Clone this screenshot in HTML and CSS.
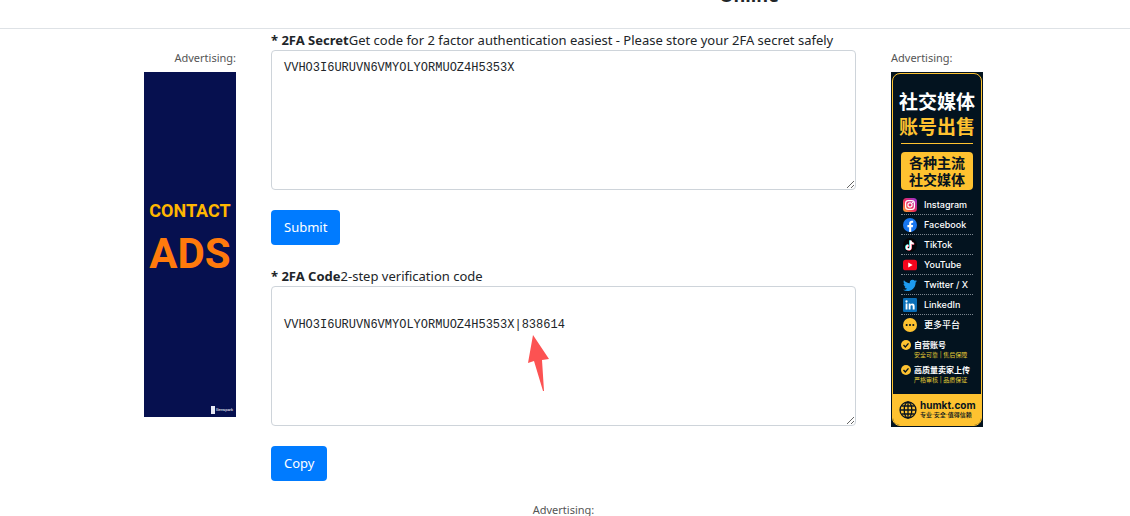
FILE: index.html
```html
<!DOCTYPE html>
<html lang="en">
  <head>
    <meta charset="utf-8" />
    <meta name="viewport" content="width=device-width, initial-scale=1" />
    <title>2FA</title>
    <link rel="stylesheet" href="styles.css" />
  </head>
  <body>
    <header class="header">
      <h1>Online</h1>
    </header>

    <div class="wrapper">
      <aside class="side side-left">
        <p class="ad-label">Advertising:</p>
        <a href="#" class="ad-contact">
          <span class="contact">CONTACT</span>
          <span class="ads">ADS</span>
          <span class="badge"><i></i>Genspark</span>
        </a>
      </aside>

      <main>
        <div class="form-group">
          <label for="listToken"><b>* 2FA Secret</b>Get code for 2 factor authentication easiest - Please store your 2FA secret safely</label>
          <textarea id="listToken" class="form-control" spellcheck="false">VVHO3I6URUVN6VMYOLYORMUOZ4H5353X</textarea>
        </div>
        <button type="button" class="btn" id="submit">Submit</button>

        <div class="form-group output">
          <label for="output"><b>* 2FA Code</b>2-step verification code</label>
          <textarea id="output" class="form-control" spellcheck="false">

VVHO3I6URUVN6VMYOLYORMUOZ4H5353X|838614</textarea>
          <svg class="arrow" viewBox="0 0 22 57" aria-hidden="true">
            <path d="M6 0 22 24 15 25 17 56h-1L7 26 1 28z" fill="#fc5252" />
          </svg>
        </div>
        <button type="button" class="btn" id="copy">Copy</button>

        <p class="ad-label ad-bottom">Advertising:</p>
      </main>

      <aside class="side">
        <p class="ad-label">Advertising:</p>
        <a href="#" class="ad-market">
          <span class="frame">
            <span class="title">社交媒体</span>
            <span class="title gold">账号出售</span>
            <span class="rule"></span>
            <span class="box">各种主流<br />社交媒体</span>
            <ul class="platforms">
              <li>
                <svg viewBox="0 0 16 16">
                  <defs>
                    <linearGradient id="ig" x1="0" y1="1" x2="1" y2="0">
                      <stop offset="0" stop-color="#ffb62e" />
                      <stop offset=".45" stop-color="#ec2859" />
                      <stop offset="1" stop-color="#8f35dd" />
                    </linearGradient>
                  </defs>
                  <rect width="16" height="16" rx="4" fill="url(#ig)" />
                  <g fill="none" stroke="#fff" stroke-width="1.4">
                    <rect x="3" y="3" width="10" height="10" rx="3" />
                    <circle cx="8" cy="8" r="2.4" />
                  </g>
                  <circle cx="11" cy="5" r=".8" fill="#fff" />
                </svg>
                Instagram
              </li>
              <li>
                <svg viewBox="0 0 16 16">
                  <circle cx="8" cy="8" r="8" fill="#1877f2" />
                  <path d="M7 16v-5.500H5V8h2V6.300C7 4 8.300 3 10 3l1.600.1v2.200h-1C9.600 5.300 9.400 5.800 9.400 6.500V8h2.200l-.4 2.500H9.400V16z" fill="#fff" />
                </svg>
                Facebook
              </li>
              <li>
                <svg viewBox="0 0 16 16">
                  <circle cx="8" cy="8" r="8" fill="#050608" />
                  <g fill="none" stroke-width="2">
                    <path d="M8 2.500v8a2.300 2.300 0 1 1-2.300-2.300M8 3c.3 2 1.600 3 3.600 3.200" stroke="#25f4ee" />
                    <path d="M9.300 3.200v8A2.300 2.300 0 1 1 7 9M9.300 3.700c.3 2 1.600 3 3.600 3.200" stroke="#fe2c55" />
                    <path d="M8.700 2.800v8a2.300 2.300 0 1 1-2.300-2.300M8.700 3.300c.3 2 1.600 3 3.600 3.200" stroke="#fff" />
                  </g>
                </svg>
                TikTok
              </li>
              <li>
                <svg viewBox="0 0 16 16">
                  <rect y="2" width="16" height="12" rx="3" fill="#f5051d" />
                  <path d="M6 5.200v5.600L11 8z" fill="#fff" />
                </svg>
                YouTube
              </li>
              <li>
                <svg viewBox="0 0 16 16">
                  <path d="M16 3.500c-.6.300-1.200.5-1.900.5.700-.4 1.200-1 1.400-1.800-.6.400-1.300.7-2.100.8a3.300 3.300 0 0 0-5.600 3C5.100 5.900 2.700 4.600 1.100 2.600.2 4.200.7 6 2.100 7c-.5 0-1-.2-1.500-.4 0 1.600 1.100 2.900 2.600 3.200-.5.100-1 .2-1.500.1.400 1.300 1.600 2.200 3.100 2.300A6.600 6.600 0 0 1 0 13.500c6.600 3.700 14.500-.6 14.400-8.300.600-.5 1.200-1 1.600-1.700z" fill="#1d9bf0" />
                </svg>
                Twitter / X
              </li>
              <li>
                <svg viewBox="0 0 16 16">
                  <rect width="16" height="16" rx="1.500" fill="#0a6fb8" />
                  <g fill="#fff">
                    <circle cx="4" cy="4" r="1.300" />
                    <path d="M3 6.300h2.100V13H3zM6.500 6.300h2v1c1-1.700 4.800-1.700 4.800 1.700v4h-2.200V9.600c0-2-2.500-1.800-2.500 0V13H6.500z" />
                  </g>
                </svg>
                LinkedIn
              </li>
              <li>
                <svg viewBox="0 0 16 16">
                  <circle cx="8" cy="8" r="8" fill="#fec230" />
                  <g fill="#06131f">
                    <circle cx="4.200" cy="8" r="1.200" />
                    <circle cx="8" cy="8" r="1.200" />
                    <circle cx="11.800" cy="8" r="1.200" />
                  </g>
                </svg>
                更多平台
              </li>
            </ul>
            <ul class="points">
              <li>
                <svg viewBox="0 0 12 12">
                  <circle cx="6" cy="6" r="6" fill="#fec230" />
                  <path d="m3 6 2.200 2.300L9 4" fill="none" stroke="#06131f" stroke-width="1.600" />
                </svg>
                <span><b>自营账号</b><small>安全可靠 | 售后保障</small></span>
              </li>
              <li>
                <svg viewBox="0 0 12 12">
                  <circle cx="6" cy="6" r="6" fill="#fec230" />
                  <path d="m3 6 2.200 2.300L9 4" fill="none" stroke="#06131f" stroke-width="1.600" />
                </svg>
                <span><b>高质量卖家上传</b><small>严格审核 | 品质保证</small></span>
              </li>
            </ul>
            <span class="site">
              <svg viewBox="0 0 18 18" fill="none" stroke="#06131f" stroke-width="1.300">
                <circle cx="9" cy="9" r="8" />
                <ellipse cx="9" cy="9" rx="3.800" ry="8" />
                <path d="M9 1v16M1 9h16M2.500 5h13M2.500 13h13" />
              </svg>
              <span><b>humkt.com</b><small>专业·安全·值得信赖</small></span>
            </span>
          </span>
        </a>
      </aside>
    </div>
  </body>
</html>
```
FILE: styles.css
```css
* {
  box-sizing: border-box;
}
body {
  margin: 0;
  padding-right: 3px;
  font-family: "Noto Sans", "Open Sans", sans-serif;
  font-size: 13px;
  line-height: 21px;
  color: #212529;
  background: #fff;
}
p,
ul {
  margin: 0;
  padding: 0;
  list-style: none;
}
a {
  text-decoration: none;
}

.header {
  height: 29px;
  margin-right: -3px;
  border-bottom: 1px solid #dee2e6;
  overflow: hidden;
}
.header h1 {
  margin: -18px 0 0;
  padding-left: 368px;
  font-family: "Open Sans", sans-serif;
  font-size: 18px;
  line-height: 26px;
  text-align: center;
}

.wrapper {
  display: grid;
  grid-template-columns: 92px minmax(0, 585px) 92px;
  column-gap: 35px;
  justify-content: center;
  align-items: start;
}
.side {
  padding-top: 20px;
}
.side-left {
  text-align: right;
}
.ad-label {
  margin-bottom: 5px;
  font-size: 11px;
  line-height: 18px;
  color: #555;
}
.ad-bottom {
  margin: 20px 0 0;
  text-align: center;
}

/* form */
.form-group {
  position: relative;
  margin: 1px 0 20px;
}
.output {
  margin-top: 21px;
}
.form-group label {
  display: block;
  line-height: 20px;
  white-space: nowrap;
}
.form-control {
  display: block;
  width: 100%;
  height: 140px;
  padding: 7px 12px;
  border: 1px solid #ced4da;
  border-radius: 4px;
  font-family: "Liberation Mono", monospace;
  font-size: 12px;
  line-height: 21px;
  color: #212529;
  background: #fff;
}
.btn {
  display: block;
  height: 35px;
  padding: 0 13px;
  border: 0;
  border-radius: 4px;
  font: inherit;
  color: #fff;
  background: #007bff;
  cursor: pointer;
}
.arrow {
  position: absolute;
  left: 256px;
  top: 69px;
  width: 22px;
  height: 57px;
}

/* left banner */
.ad-contact {
  display: flex;
  flex-direction: column;
  align-items: center;
  height: 345px;
  padding-top: 124px;
  font-family: Roboto, sans-serif;
  font-weight: 700;
  background: #06104f;
}
.contact {
  font-size: 18px;
  line-height: 30px;
  color: #ffb700;
}
.ads {
  font-size: 42px;
  line-height: 56px;
  color: #ff7a0c;
}
.badge {
  display: flex;
  align-items: center;
  gap: 1px;
  align-self: flex-end;
  margin: auto 3px 2px 0;
  font-size: 4px;
  font-weight: 400;
  line-height: 10px;
  color: #fff;
}
.badge i {
  width: 4px;
  height: 8px;
  background: #e8eaf4;
}

/* right banner */
.ad-market {
  display: block;
  padding: 1px;
  font-family: Inter, "Noto Sans CJK SC", sans-serif;
  color: #fff;
  background: #03131f;
}
.frame {
  display: flex;
  flex-direction: column;
  height: 353px;
  border: 1px solid #fec230;
  border-radius: 8px;
  overflow: hidden;
}
.title {
  font-size: 19px;
  font-weight: 700;
  line-height: 25px;
  text-align: center;
  white-space: nowrap;
}
.title:first-child {
  padding-top: 16px;
}
.gold {
  color: #fec230;
}
.rule {
  flex: none;
  height: 1px;
  margin: 3px 8px 8px;
  background: #fec230;
}
.box {
  margin: 0 8px;
  padding: 2px 0;
  border-radius: 4px;
  font-size: 14px;
  font-weight: 700;
  line-height: 17px;
  text-align: center;
  color: #06131f;
  background: #fec230;
}
.platforms {
  margin: 5px 8px 0;
}
.platforms li {
  display: flex;
  align-items: center;
  gap: 7px;
  height: 20px;
  padding-left: 2px;
  border-bottom: 1px dotted #7c868f;
  font-size: 9px;
  font-weight: 500;
  line-height: 18px;
  white-space: nowrap;
}
.platforms li:last-child {
  border: 0;
}
.platforms svg {
  flex: none;
  width: 14px;
  height: 14px;
}
.points {
  margin-left: 8px;
}
.points li {
  display: flex;
  align-items: flex-start;
  gap: 3px;
  padding-top: 5px;
}
.points svg {
  flex: none;
  width: 10px;
  height: 10px;
}
.points b,
.points small,
.site b,
.site small {
  display: block;
  line-height: 10px;
  white-space: nowrap;
}
.points b {
  font-size: 8px;
}
.points small {
  font-size: 6px;
  color: #e5cc35;
}
.site {
  display: flex;
  align-items: center;
  gap: 3px;
  height: 31px;
  margin-top: auto;
  padding-left: 6px;
  color: #06131f;
  background: #fec230;
}
.site svg {
  flex: none;
  width: 18px;
  height: 18px;
}
.site b {
  font-size: 10px;
}
.site small {
  font-size: 6px;
  font-weight: 500;
}
```
